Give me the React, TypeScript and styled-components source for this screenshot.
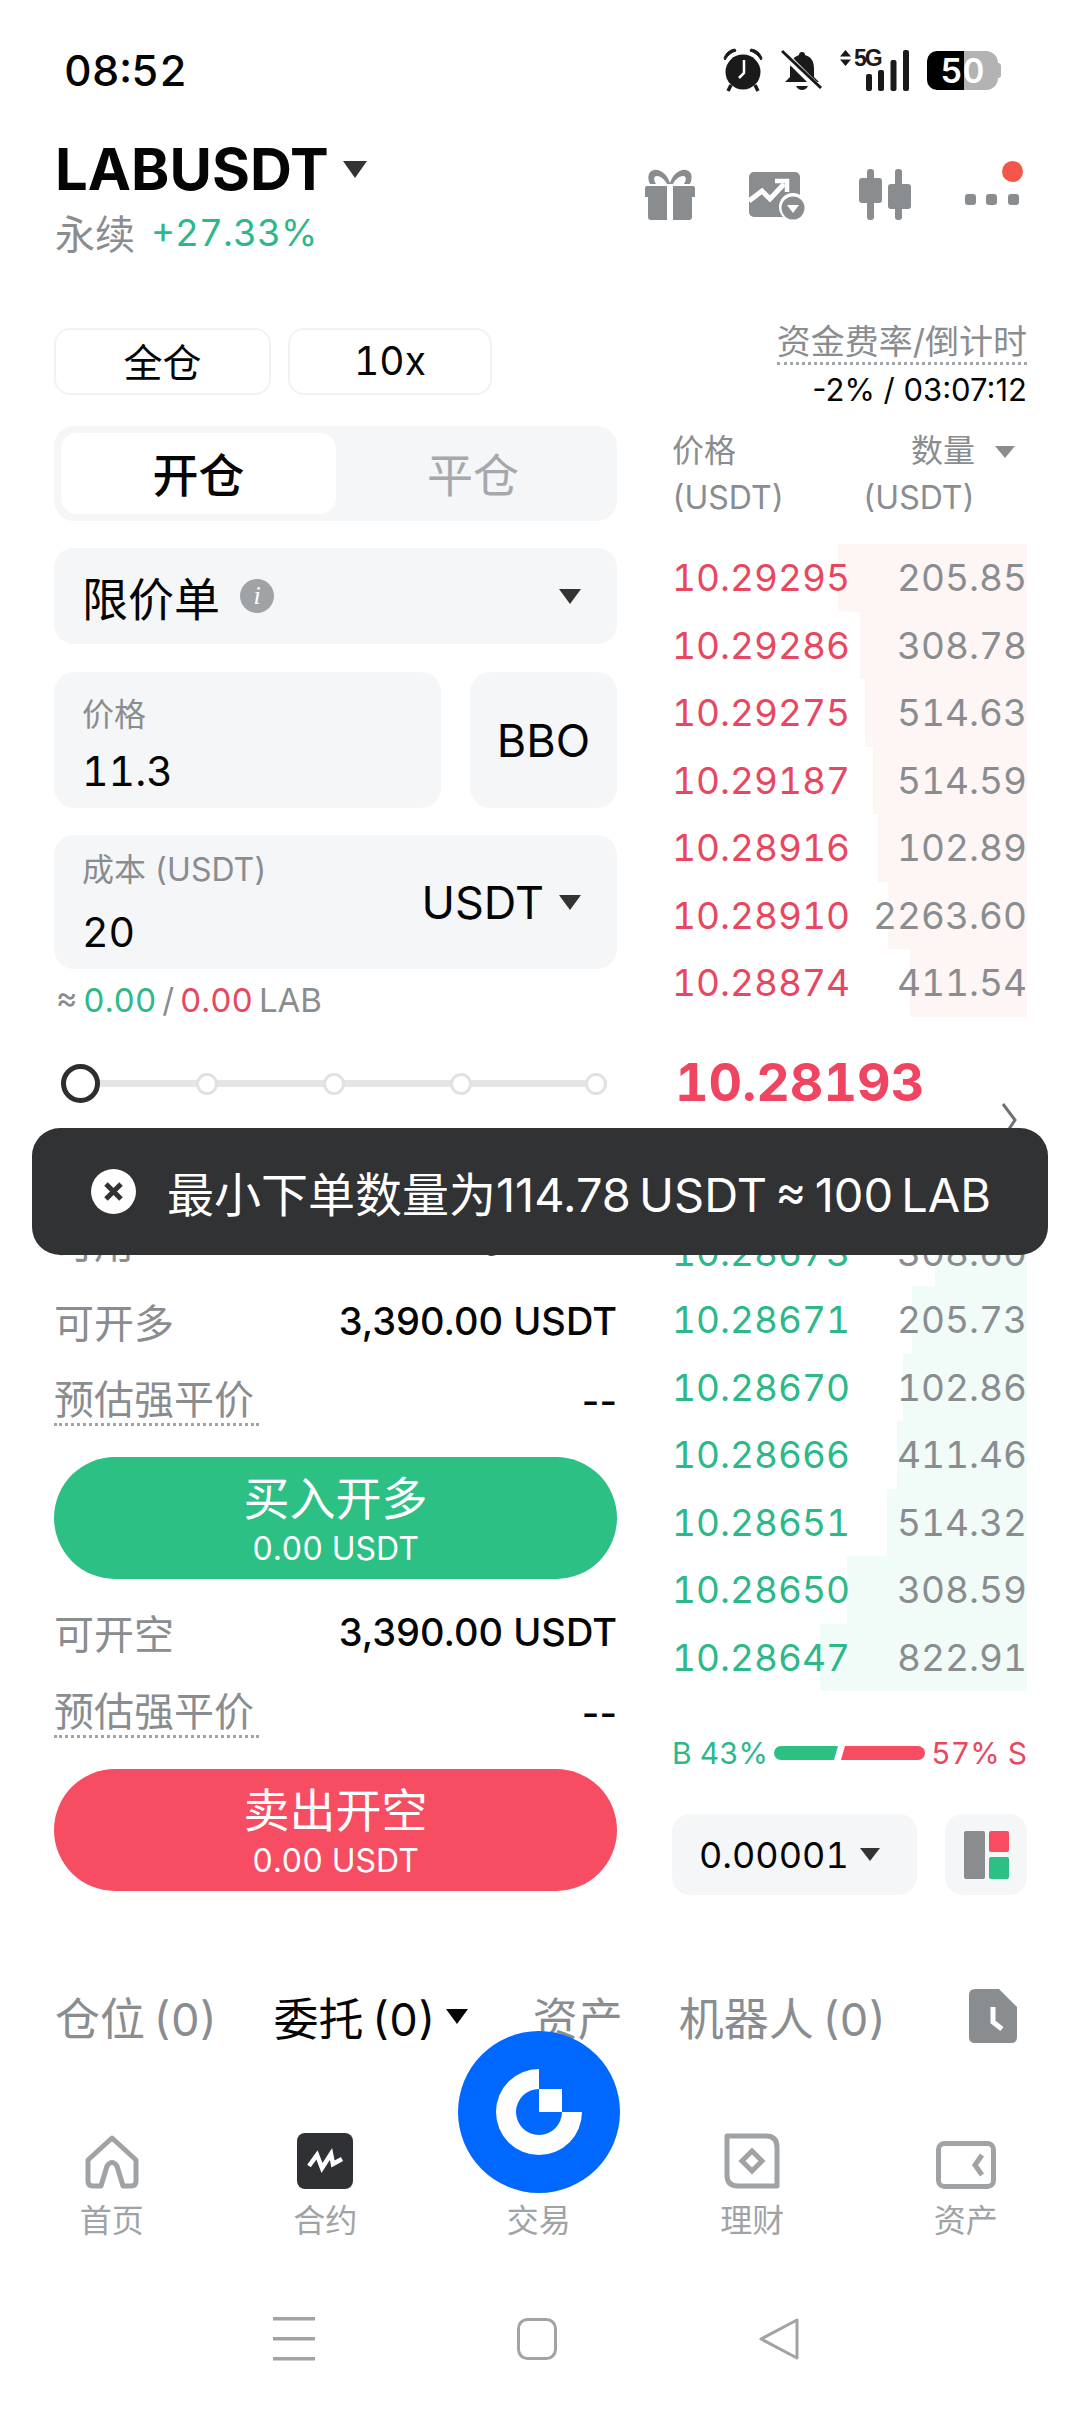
import React from 'react';
import styled, { createGlobalStyle } from 'styled-components';

const GREY = '#8a8d90';
const LIGHT = '#a0a3a6';
const FIELD = '#f5f6f7';
const INK = '#050505';
const GREEN = '#2db88a';
const RED = '#e8485f';

const GlobalStyle = createGlobalStyle`
  html, body {
    margin: 0;
    padding: 0;
    background: #fff;
  }
  * {
    box-sizing: border-box;
  }
`;

const asks = [
  ['10.29295', '205.85', 189],
  ['10.29286', '308.78', 167],
  ['10.29275', '514.63', 162],
  ['10.29187', '514.59', 154],
  ['10.28916', '102.89', 149],
  ['10.28910', '2263.60', 139],
  ['10.28874', '411.54', 117],
] as const;

const bids = [
  ['10.28673', '308.60', 92],
  ['10.28671', '205.73', 115],
  ['10.28670', '102.86', 124],
  ['10.28666', '411.46', 130],
  ['10.28651', '514.32', 140],
  ['10.28650', '308.59', 180],
  ['10.28647', '822.91', 207],
] as const;

const App: React.FC = () => {
  return (
    <Page>
      <GlobalStyle />
      <StatusBar>
        <Clock>08:52</Clock>
        <StatusIcons>
          <AlarmIcon />
          <BellOffIcon />
          <Signal>
            <NetworkRow>
              <UpDownIcon />
              <NetworkLabel>5G</NetworkLabel>
            </NetworkRow>
            <SignalIcon />
          </Signal>
          <Battery>
            <BatteryValue>50</BatteryValue>
          </Battery>
        </StatusIcons>
      </StatusBar>

      <Header>
        <div>
          <SymbolRow>
            <Symbol>LABUSDT</Symbol>
            <Caret $w={25} $h={17} $color="#333" />
          </SymbolRow>
          <SubRow>
            <SubLabel>永续</SubLabel>
            <Change>+27.33%</Change>
          </SubRow>
        </div>
        <HeaderIcons>
          <GiftIcon />
          <ChartIcon />
          <CandleIcon />
          <MoreButton>
            <MoreIcon />
            <RedDot />
          </MoreButton>
        </HeaderIcons>
      </Header>

      <Main>
        <LeftColumn>
          <MarginRow>
            <OutlineButton $width={217}>全仓</OutlineButton>
            <OutlineButton $width={204}>10x</OutlineButton>
          </MarginRow>

          <Segment>
            <SegmentItem $active>开仓</SegmentItem>
            <SegmentItem>平仓</SegmentItem>
          </Segment>

          <OrderType>
            <OrderTypeName>
              限价单
              <InfoBadge>i</InfoBadge>
            </OrderTypeName>
            <Caret $w={22} $h={15} $color="#333" />
          </OrderType>

          <PriceRow>
            <InputBox>
              <InputLabel>价格</InputLabel>
              <InputValue>11.3</InputValue>
            </InputBox>
            <BboButton>BBO</BboButton>
          </PriceRow>

          <CostBox>
            <CostText>
              <InputLabel>成本 (USDT)</InputLabel>
              <CostValue>20</CostValue>
            </CostText>
            <CostUnit>
              USDT
              <Caret $w={22} $h={15} $color="#333" />
            </CostUnit>
          </CostBox>

          <Estimate>
            ≈ <Tone $color={GREEN}>0.00</Tone> / <Tone $color={RED}>0.00</Tone> LAB
          </Estimate>

          <Slider>
            <SliderThumb />
            <SliderStop />
            <SliderStop />
            <SliderStop />
            <SliderEnd />
          </Slider>

          <Stats>
            <StatRow>
              <StatLabel>可用</StatLabel>
              <AvailableValue>
                314.00 USDT
                <PlusCircle />
              </AvailableValue>
            </StatRow>
            <StatRow>
              <StatLabel>可开多</StatLabel>
              <StatValue>3,390.00 USDT</StatValue>
            </StatRow>
            <StatRow>
              <DottedLabel>预估强平价</DottedLabel>
              <StatValue>--</StatValue>
            </StatRow>
          </Stats>
          <TradeButton $color="#2dc084">
            <TradeTitle>买入开多</TradeTitle>
            <TradeSub>0.00 USDT</TradeSub>
          </TradeButton>

          <Stats $compact>
            <StatRow>
              <StatLabel>可开空</StatLabel>
              <StatValue>3,390.00 USDT</StatValue>
            </StatRow>
            <StatRow>
              <DottedLabel>预估强平价</DottedLabel>
              <StatValue>--</StatValue>
            </StatRow>
          </Stats>
          <TradeButton $color="#f74d62">
            <TradeTitle>卖出开空</TradeTitle>
            <TradeSub>0.00 USDT</TradeSub>
          </TradeButton>
        </LeftColumn>

        <RightColumn>
          <Funding>
            <FundingLabel>资金费率/倒计时</FundingLabel>
            <FundingValue>-2% / 03:07:12</FundingValue>
          </Funding>

          <BookHead>
            <BookHeadCol>
              <span>价格</span>
              <span>(USDT)</span>
            </BookHeadCol>
            <BookHeadCol $right>
              <span>数量</span>
              <span>(USDT)</span>
            </BookHeadCol>
            <Caret $w={20} $h={12} $color={GREY} $mt={16} $ml={20} />
          </BookHead>

          <Book>
            {asks.map(([price, amount, depth]) => (
              <BookRow key={price}>
                <Depth $width={depth} $color="#fdf6f4" />
                <BookPrice $color={RED}>{price}</BookPrice>
                <BookAmount>{amount}</BookAmount>
              </BookRow>
            ))}
          </Book>

          <MidPrice>
            <MidValue>10.28193</MidValue>
            <MidChevron viewBox="0 0 16 40" fill="none" stroke="#6f7275" strokeWidth="3">
              <path d="M2 2 L14 18 L2 36" />
            </MidChevron>
          </MidPrice>

          <Book>
            {bids.map(([price, amount, depth]) => (
              <BookRow key={price}>
                <Depth $width={depth} $color="#f1fbf8" />
                <BookPrice $color={GREEN}>{price}</BookPrice>
                <BookAmount>{amount}</BookAmount>
              </BookRow>
            ))}
          </Book>

          <Ratio>
            <Tone $color={GREEN}>B 43%</Tone>
            <RatioBar viewBox="0 0 151 14">
              <path d="M7 0 H64 L60 14 H7 A7 7 0 0 1 7 0 Z" fill="#2dc084" />
              <path d="M71 0 H144 A7 7 0 0 1 144 14 H67 Z" fill="#f74d62" />
            </RatioBar>
            <Tone $color={RED}>57% S</Tone>
          </Ratio>

          <BookTools>
            <StepSelect>
              0.00001
              <Caret $w={20} $h={13} $color="#333" />
            </StepSelect>
            <LayoutButton>
              <svg width="45" height="48" viewBox="0 0 45 48">
                <rect x="0" y="0" width="21" height="48" rx="2" fill={GREY} />
                <rect x="25" y="0" width="20" height="21" rx="2" fill="#f74d62" />
                <rect x="25" y="26" width="20" height="22" rx="2" fill="#2dc084" />
              </svg>
            </LayoutButton>
          </BookTools>
        </RightColumn>
      </Main>

      <Tabs>
        <TabItem>仓位 (0)</TabItem>
        <TabItem $active>
          委托 (0)
          <Caret $w={22} $h={15} $color={INK} />
        </TabItem>
        <TabItem>资产</TabItem>
        <TabItem>机器人 (0)</TabItem>
        <DocIcon />
      </Tabs>

      <BottomNav>
        <NavItem>
          <HomeIcon />
          <NavLabel>首页</NavLabel>
        </NavItem>
        <NavItem>
          <ContractIcon />
          <NavLabel>合约</NavLabel>
        </NavItem>
        <NavItem>
          <NavSpacer />
          <NavLabel>交易</NavLabel>
        </NavItem>
        <NavItem>
          <EarnIcon />
          <NavLabel>理财</NavLabel>
        </NavItem>
        <NavItem>
          <AssetIcon />
          <NavLabel>资产</NavLabel>
        </NavItem>
      </BottomNav>

      <SystemNav>
        <svg width="42" height="44" viewBox="0 0 42 44" fill="#a3a3a3">
          <rect x="0" y="0" width="42" height="3.5" />
          <rect x="0" y="20" width="42" height="3.5" />
          <rect x="0" y="40" width="42" height="3.5" />
        </svg>
        <svg width="40" height="42" viewBox="0 0 40 42" fill="none" stroke="#a3a3a3" strokeWidth="3">
          <rect x="1.5" y="1.5" width="37" height="39" rx="9" />
        </svg>
        <svg width="40" height="42" viewBox="0 0 40 42" fill="none" stroke="#a3a3a3" strokeWidth="3" strokeLinejoin="round">
          <path d="M38 2 V40 L2 21 Z" />
        </svg>
      </SystemNav>

      <TradeFab>
        <svg width="100" height="100" viewBox="-50 -50 100 100" fill="#fff">
          <path d="M0 -43 A43 43 0 1 0 43 0 H23 A23 23 0 1 1 0 -23 Z" />
          <rect x="0" y="-23" width="23" height="23" />
        </svg>
      </TradeFab>

      <Toast>
        <ToastIcon />
        <ToastText>最小下单数量为114.78 USDT ≈ 100 LAB</ToastText>
      </Toast>
    </Page>
  );
};

const AlarmIcon = () => (
  <svg width="42" height="44" viewBox="0 0 42 44">
    <circle cx="21" cy="24" r="17.5" fill="#1a1a1a" />
    <path d="M2 10 Q5 2 13 1 L14 3 Q7 5 3 12 Z M40 10 Q37 2 29 1 L28 3 Q35 5 39 12 Z" fill="#1a1a1a" stroke="#1a1a1a" strokeWidth="1" />
    <path d="M9 37 L6 43 M33 37 L36 43" stroke="#1a1a1a" strokeWidth="3.5" />
    <path d="M22 12 V25 L17 30" stroke="#fff" strokeWidth="2.5" fill="none" />
  </svg>
);

const BellOffIcon = () => (
  <svg width="42" height="42" viewBox="0 0 42 42">
    <path d="M21 3 C23 3 24 4 24 6 C31 8 33 13 33 20 V28 L38 33 H4 L9 28 V20 C9 13 12 8 18 6 C18 4 19 3 21 3 Z" fill="#1a1a1a" />
    <path d="M15 37 H27 Q25 41 21 41 Q17 41 15 37 Z" fill="#1a1a1a" />
    <path d="M3 5 L38 40" stroke="#fff" strokeWidth="7" />
    <path d="M1 2 L40 39" stroke="#1a1a1a" strokeWidth="3" />
  </svg>
);

const UpDownIcon = () => (
  <svg width="11" height="16" viewBox="0 0 11 16" fill="#1a1a1a">
    <path d="M5.5 0 L11 6.5 H0 Z M0 9.5 H11 L5.5 16 Z" />
  </svg>
);

const SignalIcon = () => (
  <svg width="43" height="41" viewBox="0 0 43 41" fill="#1a1a1a">
    <rect x="0" y="24" width="6" height="17" rx="2" />
    <rect x="12" y="20" width="6" height="21" rx="2" />
    <rect x="24.5" y="10" width="6" height="31" rx="2" />
    <rect x="37" y="0" width="6" height="41" rx="2" />
  </svg>
);

const GiftIcon = () => (
  <svg width="50" height="51" viewBox="0 0 50 51" fill={GREY}>
    <path d="M25 14 C22 5 15 0 9 1 C3 2 2 9 5 15 H11 C8 10 9 7 12 7 C16 7 20 11 22 15 H28 C30 11 34 7 38 7 C41 7 42 10 39 15 H45 C48 9 47 2 41 1 C35 0 28 5 25 14 Z" />
    <path d="M2 17 H22 V28 H0 V19 Q0 17 2 17 Z M28 17 H48 Q50 17 50 19 V28 H28 Z" />
    <path d="M3 28 H22 V51 H6 Q3 51 3 48 Z M28 28 H47 V48 Q47 51 44 51 H28 Z" />
  </svg>
);

const ChartIcon = () => (
  <svg width="56" height="48" viewBox="0 0 56 48" fill="none">
    <rect x="0" y="0" width="51" height="45" rx="5" fill={GREY} />
    <path d="M0 29 L13 19 L21 27 L35 12" stroke="#fff" strokeWidth="5" />
    <path d="M26 9 H38 V20" stroke="#fff" strokeWidth="4.5" />
    <circle cx="44" cy="35" r="14" fill="#fff" />
    <circle cx="44" cy="36" r="11.5" fill={GREY} />
    <path d="M38 33 H50 L44 41 Z" fill="#fff" />
  </svg>
);

const CandleIcon = () => (
  <svg width="52" height="51" viewBox="0 0 52 51" fill={GREY}>
    <rect x="8" y="0" width="7" height="51" rx="3" />
    <rect x="0" y="9" width="23" height="25" rx="3" />
    <rect x="36" y="0" width="7" height="51" rx="3" />
    <rect x="29" y="15" width="23" height="25" rx="3" />
  </svg>
);

const MoreIcon = () => (
  <svg width="54" height="11" viewBox="0 0 54 11" fill={GREY}>
    <rect x="0" y="0" width="11" height="11" rx="3" />
    <rect x="21" y="0" width="11" height="11" rx="3" />
    <rect x="43" y="0" width="11" height="11" rx="3" />
  </svg>
);

const PlusCircle = () => (
  <svg width="20" height="20" viewBox="0 0 20 20">
    <circle cx="10" cy="10" r="10" fill="#111" />
  </svg>
);

const DocIcon = () => (
  <svg width="48" height="54" viewBox="0 0 48 54">
    <path d="M6 0 H30 L48 18 V48 Q48 54 42 54 H6 Q0 54 0 48 V6 Q0 0 6 0 Z" fill={GREY} />
    <path d="M24 18 V33 L33 40" stroke="#fff" strokeWidth="5" fill="none" />
  </svg>
);

const HomeIcon = () => (
  <svg width="54" height="54" viewBox="0 0 54 54" fill="none" stroke={LIGHT} strokeWidth="5" strokeLinejoin="round">
    <path d="M27 3 L51 25 V46 Q51 51 46 51 H38 L32 31 Q27 24 22 31 L16 51 H8 Q3 51 3 46 V25 Z" />
  </svg>
);

const ContractIcon = () => (
  <svg width="56" height="56" viewBox="0 0 56 56">
    <rect x="0" y="0" width="56" height="56" rx="8" fill="#2f3134" />
    <path d="M12 33 L20 22 L25 35 L34 21 L36 31 L45 26" stroke="#fff" strokeWidth="4.5" fill="none" />
  </svg>
);

const EarnIcon = () => (
  <svg width="56" height="56" viewBox="0 0 56 56" fill="none" stroke={LIGHT} strokeWidth="5">
    <path d="M3 3 H42 Q53 3 53 14 V53 H14 Q3 53 3 42 Z" strokeLinejoin="round" />
    <path d="M28 18 L38 28 L28 38 L18 28 Z" />
  </svg>
);

const AssetIcon = () => (
  <svg width="60" height="48" viewBox="0 0 60 48" fill="none" stroke={LIGHT} strokeWidth="5">
    <rect x="2.5" y="2.5" width="55" height="43" rx="6" />
    <path d="M46 14 L39 24 L46 34" />
  </svg>
);

const ToastIcon = () => (
  <svg width="45" height="45" viewBox="0 0 45 45">
    <circle cx="22.5" cy="22.5" r="22.5" fill="#fff" />
    <path d="M15 15 L30 30 M30 15 L15 30" stroke="#303234" strokeWidth="5" />
  </svg>
);

const Page = styled.div`
  position: relative;
  width: 1080px;
  height: 2412px;
  overflow: hidden;
  background: #fff;
  color: ${INK};
  font-family: Inter, 'Noto Sans CJK SC', sans-serif;
  font-variant-numeric: tabular-nums;
`;

const StatusBar = styled.div`
  display: flex;
  align-items: center;
  justify-content: space-between;
  height: 44px;
  margin-top: 48px;
  padding: 0 79px 0 64px;
`;

const Clock = styled.div`
  font-size: 43px;
  font-weight: 500;
  line-height: 44px;
`;

const StatusIcons = styled.div`
  display: flex;
  align-items: center;
  gap: 17px;
`;

const Signal = styled.div`
  position: relative;
  width: 69px;
  height: 41px;
  display: flex;
  justify-content: flex-end;
`;

const NetworkRow = styled.div`
  position: absolute;
  left: 0;
  top: 0;
  display: flex;
  align-items: center;
  gap: 3px;
  height: 16px;
`;

const NetworkLabel = styled.span`
  font-family: 'Liberation Sans', sans-serif;
  font-size: 23px;
  font-weight: 700;
  line-height: 16px;
  letter-spacing: -2px;
  color: #1a1a1a;
`;

const Battery = styled.div`
  position: relative;
  width: 71px;
  height: 39px;
  margin: 0 3px 0 1px;
  border-radius: 10px 12px 12px 10px;
  background: linear-gradient(90deg, #000 0 37px, #b3b3b3 37px);
  display: flex;
  align-items: center;
  justify-content: center;

  &::after {
    content: '';
    position: absolute;
    right: -3px;
    top: 12px;
    width: 3px;
    height: 15px;
    border-radius: 0 3px 3px 0;
    background: #b3b3b3;
  }
`;

const BatteryValue = styled.span`
  font-size: 34px;
  font-weight: 600;
  line-height: 39px;
  color: #fff;
`;

const Header = styled.header`
  display: flex;
  justify-content: space-between;
  align-items: flex-start;
  height: 231px;
  padding: 49px 61px 0 55px;
`;

const SymbolRow = styled.div`
  display: flex;
  align-items: center;
  gap: 14px;
  height: 56px;
`;

const Symbol = styled.div`
  font-size: 58px;
  font-weight: 700;
  line-height: 56px;
`;

const SubRow = styled.div`
  display: flex;
  align-items: center;
  gap: 16px;
  height: 44px;
  margin-top: 13px;
`;

const SubLabel = styled.span`
  font-size: 40px;
  color: ${GREY};
`;

const Change = styled.span`
  font-size: 37px;
  color: ${GREEN};
`;

const HeaderIcons = styled.div`
  display: flex;
  align-items: flex-end;
  gap: 54px;
  margin-top: 28px;
  height: 51px;
`;

const MoreButton = styled.div`
  position: relative;
  width: 54px;
  height: 31px;
`;

const RedDot = styled.span`
  position: absolute;
  right: -4px;
  top: -28px;
  width: 21px;
  height: 21px;
  border-radius: 50%;
  background: #f6564a;
`;

const Main = styled.main`
  display: flex;
  justify-content: space-between;
  padding: 0 53px 0 54px;
`;

const LeftColumn = styled.section`
  width: 563px;
  padding-top: 5px;
`;

const MarginRow = styled.div`
  display: flex;
  gap: 17px;
`;

const OutlineButton = styled.div<{ $width: number }>`
  width: ${({ $width }) => $width}px;
  height: 67px;
  padding-bottom: 3px;
  display: flex;
  align-items: center;
  justify-content: center;
  border: 2px solid #f1f2f3;
  border-radius: 16px;
  font-size: 39px;
`;

const Segment = styled.div`
  display: grid;
  grid-template-columns: 275px 1fr;
  height: 95px;
  margin-top: 31px;
  padding: 7px;
  border-radius: 20px;
  background: ${FIELD};
`;

const SegmentItem = styled.div<{ $active?: boolean }>`
  display: flex;
  align-items: center;
  justify-content: center;
  padding-bottom: 4px;
  border-radius: 16px;
  font-size: 46px;
  font-weight: ${({ $active }) => ($active ? 500 : 400)};
  color: ${({ $active }) => ($active ? INK : '#a6a9ac')};
  background: ${({ $active }) => ($active ? '#fff' : 'transparent')};
`;

const OrderType = styled.div`
  display: flex;
  align-items: center;
  justify-content: space-between;
  height: 96px;
  margin-top: 27px;
  padding: 0 36px 0 28px;
  border-radius: 20px;
  background: ${FIELD};
`;

const OrderTypeName = styled.div`
  display: flex;
  align-items: center;
  gap: 20px;
  font-size: 46px;
`;

const InfoBadge = styled.span`
  display: flex;
  align-items: center;
  justify-content: center;
  width: 34px;
  height: 34px;
  border-radius: 50%;
  background: ${LIGHT};
  color: #fff;
  font-family: 'Liberation Serif', serif;
  font-size: 26px;
  font-style: italic;
`;

const PriceRow = styled.div`
  display: flex;
  gap: 29px;
  margin-top: 28px;
`;

const InputBox = styled.div`
  flex: 1;
  height: 136px;
  padding: 22px 28px;
  border-radius: 20px;
  background: ${FIELD};
`;

const InputLabel = styled.div`
  height: 42px;
  font-size: 32px;
  line-height: 42px;
  color: ${GREY};
`;

const InputValue = styled.div`
  height: 50px;
  margin-top: 10px;
  font-size: 41px;
  line-height: 50px;
`;

const BboButton = styled.div`
  width: 147px;
  height: 136px;
  display: flex;
  align-items: center;
  justify-content: center;
  border-radius: 20px;
  background: ${FIELD};
  font-size: 45px;
`;

const CostBox = styled.div`
  display: flex;
  align-items: center;
  justify-content: space-between;
  height: 134px;
  margin-top: 27px;
  padding: 0 36px 0 28px;
  border-radius: 20px;
  background: ${FIELD};
`;

const CostText = styled.div`
  align-self: flex-start;
  padding-top: 14px;
`;

const CostValue = styled(InputValue)`
  margin-top: 16px;
`;

const CostUnit = styled.div`
  display: flex;
  align-items: center;
  gap: 15px;
  font-size: 45px;
`;

const Estimate = styled.div`
  height: 34px;
  margin-top: 14px;
  padding-left: 2px;
  font-size: 33px;
  line-height: 34px;
  word-spacing: -3px;
  color: ${GREY};
`;

const Tone = styled.span<{ $color: string }>`
  color: ${({ $color }) => $color};
`;

const Slider = styled.div`
  position: relative;
  display: flex;
  align-items: center;
  gap: 105px;
  width: 546px;
  height: 39px;
  margin: 47px 0 0 7px;
  background: linear-gradient(#e3e5e6, #e3e5e6) center / 100% 7px no-repeat;
`;

const SliderThumb = styled.span`
  width: 39px;
  height: 39px;
  margin-right: -9px;
  border: 5px solid #2c2e30;
  border-radius: 50%;
  background: #fff;
`;

const SliderStop = styled.span`
  width: 22px;
  height: 22px;
  border: 3px solid #dfe1e2;
  border-radius: 50%;
  background: #fff;
`;

const SliderEnd = styled(SliderStop)`
  margin-left: auto;
`;

const Stats = styled.div<{ $compact?: boolean }>`
  display: flex;
  flex-direction: column;
  gap: ${({ $compact }) => ($compact ? '35px' : '34px')};
  margin-top: ${({ $compact }) => ($compact ? '30px' : '115px')};
`;

const StatRow = styled.div`
  display: flex;
  align-items: center;
  justify-content: space-between;
  height: 46px;
`;

const StatLabel = styled.span`
  font-size: 40px;
  color: ${GREY};
`;

const DottedLabel = styled(StatLabel)`
  line-height: 46px;
  width: 205px;
  white-space: nowrap;
  border-bottom: 3px dotted #a2a5a8;
`;

const StatValue = styled.span`
  display: flex;
  align-items: center;
  font-size: 38px;
  font-weight: 500;
  font-variant-numeric: normal;
`;

const AvailableValue = styled(StatValue)`
  gap: 35px;
  padding-right: 7px;
`;

const TradeButton = styled.div<{ $color: string }>`
  display: flex;
  flex-direction: column;
  align-items: center;
  height: 122px;
  margin-top: 33px;
  padding-top: 15px;
  border-radius: 61px;
  background: ${({ $color }) => $color};
  color: #fff;
`;

const TradeTitle = styled.div`
  font-size: 46px;
  line-height: 52px;
`;

const TradeSub = styled.div`
  margin-top: 7px;
  font-size: 32px;
  line-height: 36px;
`;

const RightColumn = styled.section`
  width: 355px;
`;

const Funding = styled.div`
  display: flex;
  flex-direction: column;
  align-items: flex-end;
`;

const FundingLabel = styled.div`
  height: 42px;
  font-size: 34px;
  line-height: 38px;
  color: ${GREY};
  border-bottom: 3px dotted #a2a5a8;
`;

const FundingValue = styled.div`
  height: 36px;
  margin-top: 7px;
  font-size: 31px;
  line-height: 36px;
  font-variant-numeric: normal;
`;

const BookHead = styled.div`
  display: flex;
  justify-content: space-between;
  align-items: flex-start;
  height: 116px;
  margin-top: 20px;
  padding: 2px 12px 0 0;
`;

const BookHeadCol = styled.div<{ $right?: boolean }>`
  display: flex;
  flex-direction: column;
  gap: 6px;
  align-items: ${({ $right }) => ($right ? 'flex-end' : 'flex-start')};
  margin-left: ${({ $right }) => ($right ? 'auto' : '0')};
  font-size: 32px;
  line-height: 41px;
  color: ${GREY};
`;

const Book = styled.div`
  display: flex;
  flex-direction: column;
`;

const BookRow = styled.div`
  position: relative;
  display: flex;
  align-items: center;
  justify-content: space-between;
  height: 67.5px;
  font-size: 37px;
`;

const Depth = styled.div<{ $width: number; $color: string }>`
  position: absolute;
  top: 0;
  right: 0;
  bottom: 0;
  width: ${({ $width }) => $width}px;
  background: ${({ $color }) => $color};
`;

const BookPrice = styled.span<{ $color: string }>`
  position: relative;
  color: ${({ $color }) => $color};
`;

const BookAmount = styled.span`
  position: relative;
  color: ${GREY};
`;

const MidPrice = styled.div`
  position: relative;
  height: 202px;
`;

const MidValue = styled.div`
  padding: 36px 0 0 3px;
  font-size: 52px;
  font-weight: 700;
  line-height: 60px;
  color: #ef4560;
`;

const MidChevron = styled.svg`
  position: absolute;
  top: 85px;
  right: 10px;
  width: 16px;
  height: 40px;
`;

const Ratio = styled.div`
  display: flex;
  align-items: center;
  justify-content: space-between;
  height: 40px;
  margin-top: 42px;
  font-size: 30px;
`;

const RatioBar = styled.svg`
  width: 151px;
  height: 14px;
`;

const BookTools = styled.div`
  display: flex;
  justify-content: space-between;
  margin-top: 41px;
`;

const StepSelect = styled.div`
  display: flex;
  align-items: center;
  justify-content: space-between;
  width: 245px;
  height: 81px;
  padding: 0 37px 0 27px;
  border-radius: 18px;
  background: ${FIELD};
  font-size: 36px;
`;

const LayoutButton = styled.div`
  display: flex;
  align-items: center;
  justify-content: center;
  width: 82px;
  height: 81px;
  border-radius: 18px;
  background: ${FIELD};
`;

const Tabs = styled.nav`
  display: flex;
  align-items: center;
  height: 60px;
  margin-top: 91px;
  padding: 0 63px 0 55px;
  font-size: 45px;
  color: ${GREY};
`;

const TabItem = styled.div<{ $active?: boolean }>`
  display: flex;
  align-items: center;
  gap: 10px;
  margin-right: ${({ $active }) => ($active ? 65 : 56)}px;
  white-space: nowrap;
  word-spacing: -4px;
  color: ${({ $active }) => ($active ? INK : GREY)};

  &:last-of-type {
    margin-right: auto;
  }
`;

const BottomNav = styled.nav`
  display: grid;
  grid-template-columns: repeat(5, 213.5px);
  padding-left: 5px;
  margin-top: 85px;
`;

const NavItem = styled.div`
  display: flex;
  flex-direction: column;
  align-items: center;
  justify-content: flex-end;
  gap: 12px;
  height: 110px;
`;

const NavSpacer = styled.div`
  height: 56px;
`;

const NavLabel = styled.span`
  font-size: 32px;
  line-height: 40px;
  color: ${LIGHT};
`;

const SystemNav = styled.div`
  display: flex;
  align-items: center;
  justify-content: center;
  gap: 202px;
  height: 44px;
  margin-top: 76px;
  padding-right: 8px;
`;

const TradeFab = styled.div`
  position: absolute;
  left: 458px;
  top: 2031px;
  width: 162px;
  height: 162px;
  display: flex;
  align-items: center;
  justify-content: center;
  border-radius: 50%;
  background: #0068ff;
`;

const Toast = styled.div`
  position: absolute;
  left: 32px;
  top: 1128px;
  width: 1016px;
  height: 127px;
  display: flex;
  align-items: center;
  gap: 31px;
  padding-left: 59px;
  border-radius: 28px;
  background: #303234;
`;

const ToastText = styled.span`
  font-size: 47px;
  font-variant-numeric: normal;
  word-spacing: -5px;
  color: #fff;
  white-space: nowrap;
`;

const Caret = styled.span<{ $w: number; $h: number; $color: string; $mt?: number; $ml?: number }>`
  flex: none;
  width: 0;
  height: 0;
  margin-top: ${({ $mt }) => $mt ?? 0}px;
  margin-left: ${({ $ml }) => $ml ?? 0}px;
  border-left: ${({ $w }) => $w / 2}px solid transparent;
  border-right: ${({ $w }) => $w / 2}px solid transparent;
  border-top: ${({ $h }) => $h}px solid ${({ $color }) => $color};
`;

export default App;
